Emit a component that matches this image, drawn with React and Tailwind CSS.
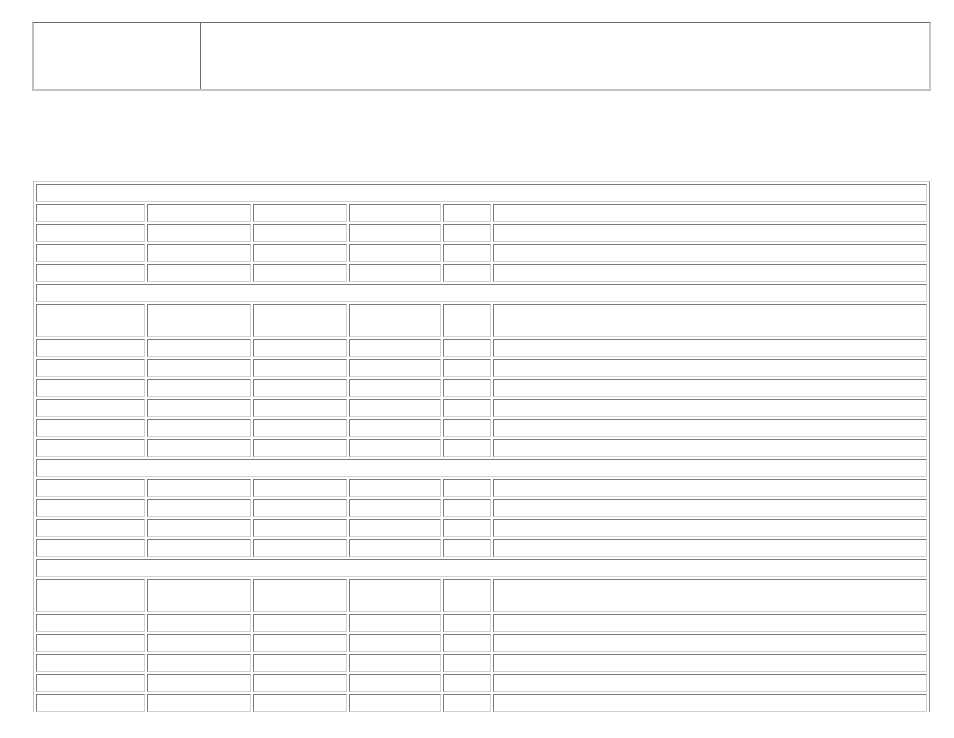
import React from 'react';

const cell =
  'p-0 border border-t-[#7a7a7a] border-l-[#7a7a7a] border-b-[#d2d2d2] border-r-[#d2d2d2]';

// row kinds: 's' section header, 'r' normal row, 't' tall row
const rows = [
  's', 'r', 'r', 'r', 'r',
  's', 't', 'r', 'r', 'r', 'r', 'r', 'r',
  's', 'r', 'r', 'r', 'r',
  's', 't', 'r', 'r', 'r', 'r', 'r', 'r', 'r',
];

const Row = ({ kind }) => {
  if (kind === 's') {
    return (
      <tr>
        <td colSpan={6} className={`${cell} h-[18px]`}></td>
      </tr>
    );
  }
  const h = kind === 't' ? 'h-[33px]' : 'h-[18px]';
  return (
    <tr>
      {[0, 1, 2, 3, 4, 5].map((i) => (
        <td key={i} className={`${cell} ${h}`}></td>
      ))}
    </tr>
  );
};

const App = () => {
  return (
    <div className="h-[738px] w-[954px] bg-white font-['Liberation_Serif',serif]">
      <div className="h-[712px] overflow-hidden">
        {/* Top box */}
        <div className="ml-[32px] mt-[22px] flex h-[69px] w-[899px] border-l-2 border-r-2 border-t border-b-2 border-l-[#c0c0c0] border-r-[#c8c8c8] border-t-[#6a6a6a] border-b-[#c4c4c4]">
          <div className="w-[167px] border-r border-r-[#6a6a6a]"></div>
          <div className="flex-1"></div>
        </div>

        {/* Main grid table */}
        <table className="ml-[33px] mt-[90px] w-[897px] table-fixed border-separate border-spacing-[2px] border border-t-[#cfcfcf] border-l-[#c0c0c0] border-r-[#888888] border-b-[#888888]">
          <colgroup>
            <col className="w-[109px]" />
            <col className="w-[104px]" />
            <col className="w-[94px]" />
            <col className="w-[92px]" />
            <col className="w-[48px]" />
            <col />
          </colgroup>
          <tbody>
            {rows.map((k, i) => (
              <Row key={i} kind={k} />
            ))}
          </tbody>
        </table>
      </div>
    </div>
  );
};

export default App;
